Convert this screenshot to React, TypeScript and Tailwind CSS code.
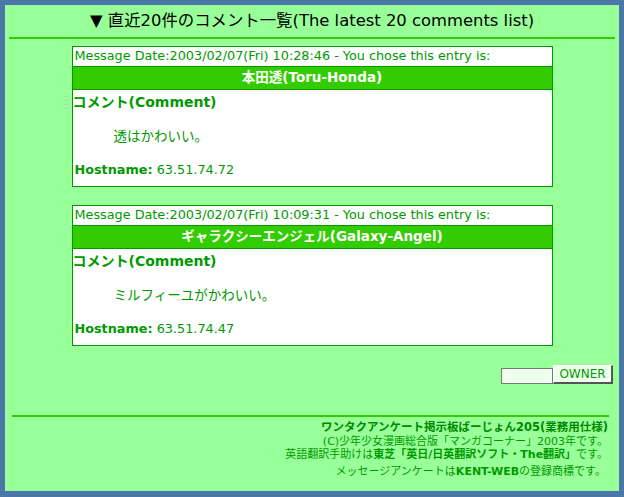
const font = "font-['DejaVu_Sans','Noto_Sans_CJK_JP',sans-serif]";

type Entry = {
	date: string;
	name: string;
	comment: string;
	host: string;
};

const entries: Entry[] = [
	{
		date: "2003/02/07(Fri) 10:28:46",
		name: "本田透(Toru-Honda)",
		comment: "透はかわいい。",
		host: "63.51.74.72",
	},
	{
		date: "2003/02/07(Fri) 10:09:31",
		name: "ギャラクシーエンジェル(Galaxy-Angel)",
		comment: "ミルフィーユがかわいい。",
		host: "63.51.74.47",
	},
];

const EntryTable = ({ entry }: { entry: Entry }) => (
	<div className="w-[481px] mx-auto border border-[#009900] bg-white text-[#009900]">
		<div className="h-[19px] flex items-center px-[2px] text-[12.8px] leading-none">
			Message Date:{entry.date} - You chose this entry is:
		</div>
		<div className="h-[24px] border-y border-[#009900] bg-[#33cc00] flex items-center justify-center text-white font-bold text-[13.5px] leading-none">
			{entry.name}
		</div>
		<div className="h-[96px] flex flex-col">
			<div className="h-[23px] flex items-center font-bold text-[14px] leading-none">
				コメント(Comment)
			</div>
			<div className="h-[48px] flex items-center pl-[41px] text-[13.5px] leading-none">
				{entry.comment}
			</div>
			<div className="h-[18px] flex items-center px-[2px] text-[12.8px] leading-none">
				<span className="font-bold">Hostname:</span>&nbsp;{entry.host}
			</div>
		</div>
	</div>
);

export default function App() {
	return (
		<div className={`w-[624px] h-[497px] bg-[#4b78a8] pt-[5px] px-[5px] pb-[6px] ${font}`}>
			<div className="h-full bg-[#99ff99] flex flex-col">
				{/* Title */}
				<div className="h-[32px] flex items-center justify-center text-black text-[16.4px] leading-none">
					▼ 直近20件のコメント一覧(The latest 20 comments list)
				</div>
				<div className="h-[2px] mx-[4px] bg-[#33cc00]" />

				{/* Comments */}
				<div className="mt-[7px] flex flex-col gap-[18px]">
					{entries.map((e, i) => (
						<EntryTable key={i} entry={e} />
					))}
				</div>

				{/* Owner login */}
				<div className="mt-[19px] flex justify-end items-end pr-[6px]">
					<input
						type="password"
						className="w-[52px] h-[16px] bg-[#eeffee] border border-[#777] outline-none"
					/>
					<button className="w-[60px] h-[19px] bg-[#eeffee] border-t border-l border-white border-r-2 border-b-2 border-r-[#555] border-b-[#555] text-[#009900] text-[12px] leading-none">
						OWNER
					</button>
				</div>

				<div className="mt-[31px] h-[2px] ml-[7px] mr-[10px] bg-[#33cc00]" />

				{/* Footer */}
				<div className="mt-[3px] pr-[11px] flex flex-col items-end text-[#009900] text-[11px] leading-[13px]">
					<div className="font-bold text-[#008800] text-[11.5px] leading-[15px]">
						ワンタクアンケート掲示板ばーじょん205(業務用仕様)
					</div>
					<div>(C)少年少女漫画総合版「マンガコーナー」2003年です。</div>
					<div>
						英語翻訳手助けは<span className="font-bold">東芝「英日/日英翻訳ソフト・The翻訳」</span>です。
					</div>
					<div className="mt-[4px] pr-[2px]">
						メッセージアンケートは<span className="font-bold">KENT-WEB</span>の登録商標です。
					</div>
				</div>
			</div>
		</div>
	);
}
